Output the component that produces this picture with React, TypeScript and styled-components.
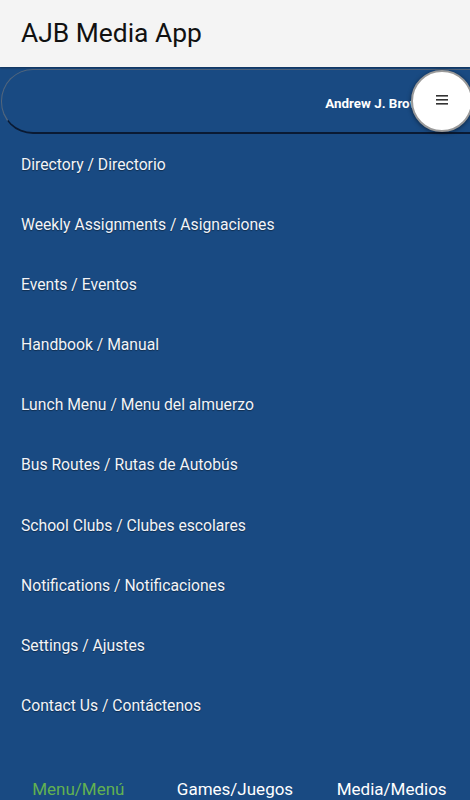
import styled, { createGlobalStyle } from "styled-components";

const GlobalStyle = createGlobalStyle`
  html, body {
    margin: 0;
    padding: 0;
    background: #194a82;
    font-family: Roboto, "Liberation Sans", sans-serif;
  }
`;

const Page = styled.div`
  width: 470px;
  height: 800px;
  overflow: hidden;
  display: flex;
  flex-direction: column;
  background: #194a82;
`;

const Header = styled.header`
  height: 67px;
  flex: none;
  background: #f4f4f4;
  display: flex;
  align-items: center;
  padding-left: 21px;
  box-shadow: 0 1px 2px rgba(0, 0, 0, 0.35);
  position: relative;
  z-index: 2;
`;

const Title = styled.h1`
  margin: 0 0 2px 0;
  font-size: 26.4px;
  font-weight: 400;
  color: #111;
`;

const ProfileBar = styled.div`
  position: relative;
  margin: 2px -40px 0 1px;
  height: 62px;
  border-radius: 32px;
  border: 1px solid rgba(120, 120, 120, 0.6);
  border-bottom: 2px solid #0a1a33;
  display: flex;
  align-items: center;
  justify-content: flex-end;
  padding-right: 82px;
`;

const UserName = styled.span`
  color: #fff;
  font-weight: 700;
  font-size: 13.4px;
  margin-top: 5px;
  white-space: nowrap;
`;

const MenuButton = styled.button`
  position: absolute;
  left: 409px;
  top: 0;
  width: 62px;
  height: 62px;
  border-radius: 50%;
  background: #fff;
  border: 2px solid #9a9a9a;
  box-shadow: 0 1px 4px rgba(0, 0, 0, 0.5);
  display: flex;
  align-items: center;
  justify-content: center;
  padding: 0 0 3px 0;
  cursor: pointer;
`;

const MenuList = styled.nav`
  display: flex;
  flex-direction: column;
  padding-top: 20px;
`;

const MenuItem = styled.a`
  height: 60.1px;
  line-height: 22px;
  padding-left: 21px;
  font-size: 15.7px;
  color: #f2f4f8;
  text-shadow: 0 1px 1px rgba(0, 0, 0, 0.4);
  text-decoration: none;
`;

const TabBar = styled.div`
  margin-top: auto;
  display: grid;
  grid-template-columns: repeat(3, 1fr);
  height: 30px;
`;

const Tab = styled.div<{ $active?: boolean }>`
  text-align: center;
  font-size: 17px;
  line-height: 20px;
  padding-top: 9px;
  color: ${(p) => (p.$active ? "#62b151" : "#fff")};
`;

const items = [
  "Directory / Directorio",
  "Weekly Assignments / Asignaciones",
  "Events / Eventos",
  "Handbook / Manual",
  "Lunch Menu / Menu del almuerzo",
  "Bus Routes / Rutas de Autobús",
  "School Clubs / Clubes escolares",
  "Notifications / Notificaciones",
  "Settings / Ajustes",
  "Contact Us / Contáctenos",
];

export default function App() {
  return (
    <>
      <GlobalStyle />
      <Page>
        <Header>
          <Title>AJB Media App</Title>
        </Header>
        <ProfileBar>
          <UserName>Andrew J. Brown</UserName>
          <MenuButton aria-label="menu">
            <svg width="12" height="10" viewBox="0 0 12 10">
              <rect x="0" y="0" width="12" height="1.6" fill="#333" />
              <rect x="0" y="4" width="12" height="1.6" fill="#333" />
              <rect x="0" y="8" width="12" height="1.6" fill="#333" />
            </svg>
          </MenuButton>
        </ProfileBar>
        <MenuList>
          {items.map((t) => (
            <MenuItem key={t}>{t}</MenuItem>
          ))}
        </MenuList>
        <TabBar>
          <Tab $active>Menu/Menú</Tab>
          <Tab>Games/Juegos</Tab>
          <Tab>Media/Medios</Tab>
        </TabBar>
      </Page>
    </>
  );
}
